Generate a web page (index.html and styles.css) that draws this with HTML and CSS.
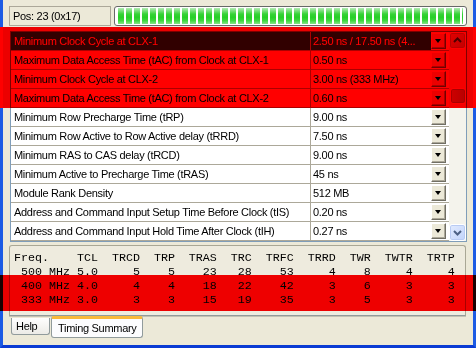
FILE: index.html
```html
<!DOCTYPE html>
<html lang="en">

<head>
    <meta charset="UTF-8">
    <title>SPD Timing</title>
    <link rel="stylesheet" href="styles.css">
</head>

<body>
    <div class="window">

        <div class="topbar">
            <div class="pos">Pos: 23 (0x17)</div>
            <div class="progress"><div class="progress-fill"></div></div>
        </div>

        <div class="grid">
            <div class="rows">
                <div class="row sel">
                    <div class="name">Minimum Clock Cycle at CLX-1</div>
                    <div class="value">2.50 ns / 17.50 ns (4...</div>
                    <div class="drop"><span class="arrow"></span></div>
                </div>
                <div class="row">
                    <div class="name">Maximum Data Access Time (tAC) from Clock at CLX-1</div>
                    <div class="value">0.50 ns</div>
                    <div class="drop"><span class="arrow"></span></div>
                </div>
                <div class="row">
                    <div class="name">Minimum Clock Cycle at CLX-2</div>
                    <div class="value">3.00 ns (333 MHz)</div>
                    <div class="drop"><span class="arrow"></span></div>
                </div>
                <div class="row">
                    <div class="name">Maximum Data Access Time (tAC) from Clock at CLX-2</div>
                    <div class="value">0.60 ns</div>
                    <div class="drop"><span class="arrow"></span></div>
                </div>
                <div class="row">
                    <div class="name">Minimum Row Precharge Time (tRP)</div>
                    <div class="value">9.00 ns</div>
                    <div class="drop"><span class="arrow"></span></div>
                </div>
                <div class="row">
                    <div class="name">Minimum Row Active to Row Active delay (tRRD)</div>
                    <div class="value">7.50 ns</div>
                    <div class="drop"><span class="arrow"></span></div>
                </div>
                <div class="row">
                    <div class="name">Minimum RAS to CAS delay (tRCD)</div>
                    <div class="value">9.00 ns</div>
                    <div class="drop"><span class="arrow"></span></div>
                </div>
                <div class="row">
                    <div class="name">Minimum Active to Precharge Time (tRAS)</div>
                    <div class="value">45 ns</div>
                    <div class="drop"><span class="arrow"></span></div>
                </div>
                <div class="row">
                    <div class="name">Module Rank Density</div>
                    <div class="value">512 MB</div>
                    <div class="drop"><span class="arrow"></span></div>
                </div>
                <div class="row">
                    <div class="name">Address and Command Input Setup Time Before Clock (tIS)</div>
                    <div class="value">0.20 ns</div>
                    <div class="drop"><span class="arrow"></span></div>
                </div>
                <div class="row">
                    <div class="name">Address and Command Input Hold Time After Clock (tIH)</div>
                    <div class="value">0.27 ns</div>
                    <div class="drop"><span class="arrow"></span></div>
                </div>
            </div>

            <div class="vscroll">
                <div class="sb-btn">
                    <svg width="15" height="15" viewBox="0 0 15 15"><path d="M4 9 L7.5 5.5 L11 9" fill="none" stroke="#4d6185" stroke-width="2"/></svg>
                </div>
                <div class="sb-track"><div class="sb-thumb"></div></div>
                <div class="sb-btn">
                    <svg width="15" height="15" viewBox="0 0 15 15"><path d="M4 6 L7.5 9.5 L11 6" fill="none" stroke="#4d6185" stroke-width="2"/></svg>
                </div>
            </div>
        </div>

        <div class="tabctl">
            <div class="tab-panel">
<pre class="timing">Freq.    TCL  TRCD  TRP  TRAS  TRC  TRFC  TRRD  TWR  TWTR  TRTP
 500 MHz 5.0     5    5    23   28    53     4    8     4     4
 400 MHz 4.0     4    4    18   22    42     3    6     3     3
 333 MHz 3.0     3    3    15   19    35     3    5     3     3</pre>
            </div>
            <div class="tab-strip">
                <div class="tab">Help</div>
                <div class="tab active">Timing Summary</div>
            </div>
        </div>

    </div>

    <!-- red markers drawn over the screenshot -->
    <div class="hl hl-top"></div>
    <div class="hl-edge left"></div>
    <div class="hl-edge right"></div>
    <div class="hl hl-timing"></div>
</body>

</html>
```

FILE: styles.css
```css
body {
    margin: 0;
    position: relative;
    width: 476px;
    height: 348px;
    overflow: hidden;
    font-family: "Liberation Sans", Arial, sans-serif;
    font-size: 11px;
    letter-spacing: -0.3px;
    color: #000;
}

.window {
    box-sizing: border-box;
    width: 476px;
    height: 348px;
    background: #ECE9D8;
    border: 3px solid #1C5BE4;
    border-top: 0;
    border-bottom-color: #0A3BD3;
}

/* top status row */
.topbar {
    display: flex;
    align-items: flex-start;
    gap: 3px;
    box-sizing: border-box;
    height: 31px;
    padding: 6px 6px 0 6px;
}

.pos {
    box-sizing: border-box;
    width: 102px;
    height: 20px;
    border: 1px solid #ACA899;
    padding-left: 3px;
    line-height: 18px;
    white-space: nowrap;
}

.progress {
    box-sizing: border-box;
    width: 353px;
    height: 20px;
    border: 1px solid #686868;
    border-radius: 3px;
    padding: 1px 3px;
    background: #fff;
}

.progress-fill {
    height: 16px;
    background:
        repeating-linear-gradient(to right, transparent 0 6px, #fff 6px 8px),
        linear-gradient(to bottom, #b3ecb3 0%, #79df79 18%, #36d336 38%, #27cf27 58%, #3bd63b 78%, #86e486 100%);
}

/* property list */
.grid {
    display: flex;
    box-sizing: border-box;
    width: 457px;
    height: 211px;
    margin-left: 7px;
    border: 1px solid #7F9DB9;
    background: #fff;
}

.rows {
    width: 438px;
}

.row {
    display: flex;
    box-sizing: border-box;
    height: 19px;
    border-bottom: 1px solid #ACA899;
}

.name {
    box-sizing: border-box;
    width: 300px;
    padding-left: 3px;
    border-right: 1px solid #ACA899;
    line-height: 18px;
    white-space: nowrap;
    overflow: hidden;
}

.value {
    box-sizing: border-box;
    width: 120px;
    padding-left: 2px;
    line-height: 18px;
    white-space: nowrap;
    overflow: hidden;
}

.row.sel .name,
.row.sel .value {
    background: #316AC5;
    color: #fff;
}

.drop {
    box-sizing: border-box;
    width: 15px;
    height: 16px;
    margin: 1px 3px 0 0;
    background: #ECE9D8;
    border: 1px solid;
    border-color: #fff #716F64 #716F64 #fff;
    box-shadow: inset -1px -1px 0 #ACA899;
    display: flex;
    align-items: center;
    justify-content: center;
}

.arrow {
    width: 0;
    height: 0;
    border-left: 3.5px solid transparent;
    border-right: 3.5px solid transparent;
    border-top: 4px solid #000;
    margin: 0 1px 0 0;
}

/* xp scrollbar */
.vscroll {
    display: flex;
    flex-direction: column;
    width: 17px;
    background: #F4F3EC;
}

.sb-btn {
    box-sizing: border-box;
    width: 17px;
    height: 17px;
    border: 1px solid #fff;
    border-radius: 3px;
    background: linear-gradient(135deg, #e2ebfe, #c1d3fb);
    box-shadow: inset 0 0 0 1px #b9cbf3;
    display: flex;
    align-items: center;
    justify-content: center;
}

.sb-track {
    flex: 1;
}

.sb-thumb {
    box-sizing: border-box;
    width: 16px;
    height: 16px;
    margin: 39px 0 0 1px;
    border: 1px solid #fff;
    border-radius: 3px;
    background: linear-gradient(to right, #cddafc, #b8cbf8);
    box-shadow: inset 0 0 0 1px #a9bfee;
}

/* tab control with the timing table */
.tabctl {
    width: 457px;
    margin: 3px 0 0 6px;
}

.tab-panel {
    box-sizing: border-box;
    height: 71px;
    border: 1px solid #A9A795;
    border-bottom-color: #919B9C;
    border-radius: 3px 3px 0 0;
    box-shadow: 0 1px 0 #C4C1B2;
    background: #EEEBDE;
}

.timing {
    margin: 0;
    padding: 5px 0 0 4px;
    font-family: "Liberation Mono", "Courier New", monospace;
    font-size: 11.67px;
    letter-spacing: 0;
    line-height: 14px;
}

.tab-strip {
    display: flex;
    align-items: flex-start;
    padding-left: 2px;
}

.tab {
    box-sizing: border-box;
    width: 39px;
    height: 17px;
    margin-top: 2px;
    padding-left: 4px;
    border: 1px solid #919B9C;
    border-top: 0;
    border-radius: 0 0 3px 3px;
    background: linear-gradient(to bottom, #fefefe, #ecebe6);
    line-height: 16px;
}

.tab.active {
    width: 92px;
    height: 22px;
    margin: 0 0 0 1px;
    padding-left: 6px;
    border-top: 3px solid #F9B93A;
    border-radius: 3px;
    background: #FCFCFE;
    line-height: 18px;
}

/* red highlight markers */
.hl {
    position: absolute;
    left: 0;
    width: 476px;
    background: #f00;
    mix-blend-mode: multiply;
}

.hl-top {
    top: 27px;
    height: 81px;
}

.hl-timing {
    top: 275px;
    height: 36px;
}

.hl-edge {
    position: absolute;
    top: 27px;
    width: 3px;
    height: 81px;
    background: #f00;
}

.hl-edge.left {
    left: 0;
}

.hl-edge.right {
    right: 0;
}
```
